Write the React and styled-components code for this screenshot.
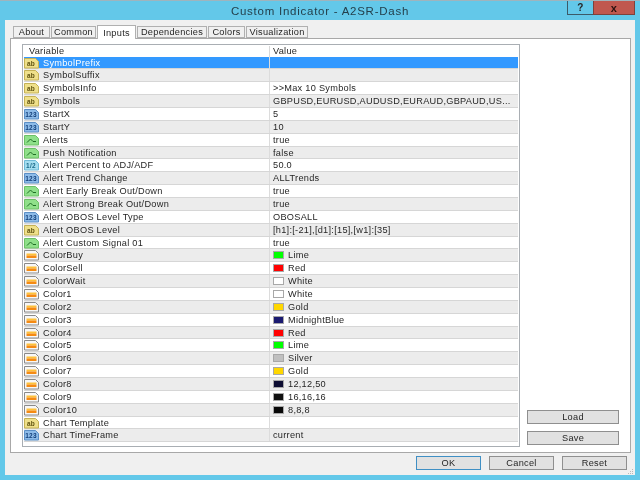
import styled, { createGlobalStyle } from "styled-components";

const GlobalStyle = createGlobalStyle`
  html, body {
    margin: 0;
    padding: 0;
    width: 640px;
    height: 480px;
    overflow: hidden;
    background: #63c8e9;
  }
`;

const rows = [
  ["text", "SymbolPrefix", ""],
  ["text", "SymbolSuffix", ""],
  ["text", "SymbolsInfo", ">>Max 10 Symbols"],
  ["text", "Symbols", "GBPUSD,EURUSD,AUDUSD,EURAUD,GBPAUD,US..."],
  ["int", "StartX", "5"],
  ["int", "StartY", "10"],
  ["bool", "Alerts", "true"],
  ["bool", "Push Notification", "false"],
  ["real", "Alert Percent to ADJ/ADF", "50.0"],
  ["int", "Alert Trend Change", "ALLTrends"],
  ["bool", "Alert Early Break Out/Down", "true"],
  ["bool", "Alert Strong Break Out/Down", "true"],
  ["int", "Alert OBOS Level Type", "OBOSALL"],
  ["text", "Alert OBOS Level", "[h1]:[-21],[d1]:[15],[w1]:[35]"],
  ["bool", "Alert Custom Signal 01", "true"],
  ["color", "ColorBuy", "Lime", "#00ff00"],
  ["color", "ColorSell", "Red", "#ff0000"],
  ["color", "ColorWait", "White", "#ffffff"],
  ["color", "Color1", "White", "#ffffff"],
  ["color", "Color2", "Gold", "#ffd700"],
  ["color", "Color3", "MidnightBlue", "#191970"],
  ["color", "Color4", "Red", "#ff0000"],
  ["color", "Color5", "Lime", "#00ff00"],
  ["color", "Color6", "Silver", "#c0c0c0"],
  ["color", "Color7", "Gold", "#ffd700"],
  ["color", "Color8", "12,12,50", "#0c0c32"],
  ["color", "Color9", "16,16,16", "#101010"],
  ["color", "Color10", "8,8,8", "#080808"],
  ["text", "Chart Template", ""],
  ["int", "Chart TimeFrame", "current"],
];

const tabs = [
  ["About", 37],
  ["Common", 45],
  ["Inputs", 39],
  ["Dependencies", 70],
  ["Colors", 37],
  ["Visualization", 62],
];

const badgeColors = {
  text: { fill: "#efe08a", edge: "#c4b155", ink: "#5f5210", label: "ab" },
  int: { fill: "#8dbbe8", edge: "#5b8fc6", ink: "#123f7a", label: "123" },
  real: { fill: "#a5def0", edge: "#6fb9d6", ink: "#1b6a8a", label: "1/2" },
};

const sheet = "M.5 1.5h11l3 3v6.5h-14z";

const TypeIcon = ({ type }) => {
  if (type === "bool") {
    return (
      <svg width="15" height="12" viewBox="0 0 15 12">
        <path d={sheet} fill="#8fe08a" stroke="#6cc066" />
        <path d="M3 8.5l3.5-3.5 2.5 2.5h3" fill="none" stroke="#1f6f25" strokeWidth="1" />
      </svg>
    );
  }
  if (type === "color") {
    return (
      <svg width="15" height="12" viewBox="0 0 15 12">
        <path d={sheet} fill="#f7f7f7" stroke="#8a8a8a" />
        <rect x="2.5" y="4.5" width="10" height="2" fill="#ffc23a" />
        <rect x="2.5" y="6.5" width="10" height="2.5" fill="#f58a12" />
      </svg>
    );
  }
  const c = badgeColors[type];
  return (
    <svg width="15" height="12" viewBox="0 0 15 12">
      <path d={sheet} fill={c.fill} stroke={c.edge} />
      <text x="7" y="9" textAnchor="middle" fontSize="6.5" fontWeight="700" fontFamily="Liberation Sans, sans-serif" fill={c.ink}>
        {c.label}
      </text>
    </svg>
  );
};

const App = () => (
  <Window>
    <GlobalStyle />
    <TitleBar>
      <Title>Custom Indicator - A2SR-Dash</Title>
      <Controls>
        <HelpButton>?</HelpButton>
        <CloseButton>x</CloseButton>
      </Controls>
    </TitleBar>
    <Panel>
      <TabStrip>
        {tabs.map(([t, w]) => (
          <Tab key={t} $active={t === "Inputs"} $width={w}>{t}</Tab>
        ))}
      </TabStrip>
      <TabPage>
        <Grid>
          <HeadRow>
            <HeadCell>Variable</HeadCell>
            <HeadCell $last>Value</HeadCell>
          </HeadRow>
          {rows.map(([type, name, value, swatch], i) => (
            <Row key={name} $selected={i === 0} $shaded={i % 2 === 1}>
              <NameCell>
                <TypeIcon type={type} />
                <span>{name}</span>
              </NameCell>
              <ValueCell>
                {swatch && <Swatch $color={swatch} />}
                {value}
              </ValueCell>
            </Row>
          ))}
        </Grid>
        <SideButtons>
          <SideButton>Load</SideButton>
          <SideButton>Save</SideButton>
        </SideButtons>
      </TabPage>
      <Footer>
        <FootButton $primary>OK</FootButton>
        <FootButton>Cancel</FootButton>
        <FootButton>Reset</FootButton>
        <Grip width="6" height="6" viewBox="0 0 6 6">
          <path d="M4 0h1v1H4zM2 2h1v1H2zM4 2h1v1H4zM0 4h1v1H0zM2 4h1v1H2zM4 4h1v1H4z" fill="#b8b8b8" />
        </Grip>
      </Footer>
    </Panel>
  </Window>
);

const Window = styled.div`
  width: 640px;
  height: 480px;
  box-sizing: border-box;
  display: flex;
  flex-direction: column;
  background: #63c8e9;
  border-top: 1px solid #9fb4bd;
  font-family: "Liberation Sans", Arial, sans-serif;
  font-size: 9.2px;
  letter-spacing: 0.28px;
  color: #262626;
  filter: blur(0.3px);
`;

const TitleBar = styled.div`
  height: 19px;
  position: relative;
  display: flex;
  align-items: center;
  justify-content: center;
`;

const Title = styled.div`
  font-size: 11.5px;
  letter-spacing: 0.75px;
  color: #24404c;
`;

const Controls = styled.div`
  position: absolute;
  top: 0;
  right: 5px;
  display: flex;
`;

const HelpButton = styled.div`
  width: 25px;
  height: 13px;
  display: flex;
  align-items: center;
  justify-content: center;
  border: 1px solid #3c5a68;
  border-top: none;
  border-right: none;
  font-weight: 700;
  font-size: 10px;
`;

const CloseButton = styled(HelpButton)`
  width: 40px;
  border: 1px solid #7d423c;
  border-top: none;
  background: #c0584f;
  font-size: 11px;
  color: #2a1210;
`;

const Panel = styled.div`
  margin: 0 5px 5px;
  flex: 1;
  min-height: 0;
  display: flex;
  flex-direction: column;
  background: #f0f0f0;
  padding: 6px 4px 0 5px;
`;

const TabStrip = styled.div`
  height: 12px;
  display: flex;
  align-items: flex-end;
  padding-left: 3px;
  position: relative;
  z-index: 1;
`;

const Tab = styled.div`
  width: ${(p) => p.$width}px;
  height: ${(p) => (p.$active ? "14px" : "12px")};
  margin-bottom: ${(p) => (p.$active ? "-1px" : "0")};
  box-sizing: border-box;
  display: flex;
  align-items: center;
  justify-content: center;
  background: ${(p) => (p.$active ? "#ffffff" : "#f0f0f0")};
  border: 1px solid #b0b0b0;
  border-bottom: ${(p) => (p.$active ? "none" : "1px solid #b0b0b0")};
  margin-right: 1px;
`;

const TabPage = styled.div`
  height: 415px;
  box-sizing: border-box;
  display: flex;
  background: #ffffff;
  border: 1px solid #a8a8a8;
  padding: 5px 11px 0 11px;
`;

const Grid = styled.div`
  width: 498px;
  height: 403px;
  box-sizing: border-box;
  border: 1px solid #a9aeb3;
  padding: 1px;
  flex-shrink: 0;
  background: #ffffff;
`;

const HeadRow = styled.div`
  height: 10.5px;
  display: grid;
  grid-template-columns: 246px 1fr;
  align-items: center;
`;

const HeadCell = styled.div`
  height: 100%;
  display: flex;
  align-items: center;
  padding-left: ${(p) => (p.$last ? "3px" : "5px")};
  border-right: ${(p) => (p.$last ? "none" : "1px solid #d8d8d8")};
`;

const Row = styled.div`
  height: 12.86px;
  box-sizing: border-box;
  display: grid;
  grid-template-columns: 246px 1fr;
  align-items: center;
  background: ${(p) => (p.$selected ? "#3399ff" : p.$shaded ? "#ececec" : "#ffffff")};
  color: ${(p) => (p.$selected ? "#ffffff" : "inherit")};
  border-bottom: 1px solid #d6d6d6;
`;

const NameCell = styled.div`
  height: 100%;
  display: flex;
  align-items: center;
  gap: 4px;
  border-right: 1px solid #dcdcdc;
  white-space: nowrap;
`;

const ValueCell = styled.div`
  display: flex;
  align-items: center;
  gap: 4px;
  padding-left: 3px;
  white-space: nowrap;
`;

const Swatch = styled.span`
  width: 11px;
  height: 8px;
  box-sizing: border-box;
  background: ${(p) => p.$color};
  border: 1px solid #a8a8a8;
`;

const SideButtons = styled.div`
  flex: 1;
  display: flex;
  flex-direction: column;
  justify-content: flex-end;
  align-items: flex-end;
  gap: 7px;
  padding-bottom: 7px;
`;

const SideButton = styled.div`
  width: 92px;
  height: 14px;
  box-sizing: border-box;
  display: flex;
  align-items: center;
  justify-content: center;
  background: #e1e1e1;
  border: 1px solid #8f8f8f;
`;

const Footer = styled.div`
  flex: 1;
  position: relative;
  display: flex;
  justify-content: flex-end;
  align-items: center;
  gap: 8px;
  padding: 0 4px 3px 0;
`;

const FootButton = styled(SideButton)`
  width: 65px;
  border-color: ${(p) => (p.$primary ? "#3f8fc4" : "#8f8f8f")};
`;

const Grip = styled.svg`
  position: absolute;
  right: -3px;
  bottom: 0;
`;

export default App;
